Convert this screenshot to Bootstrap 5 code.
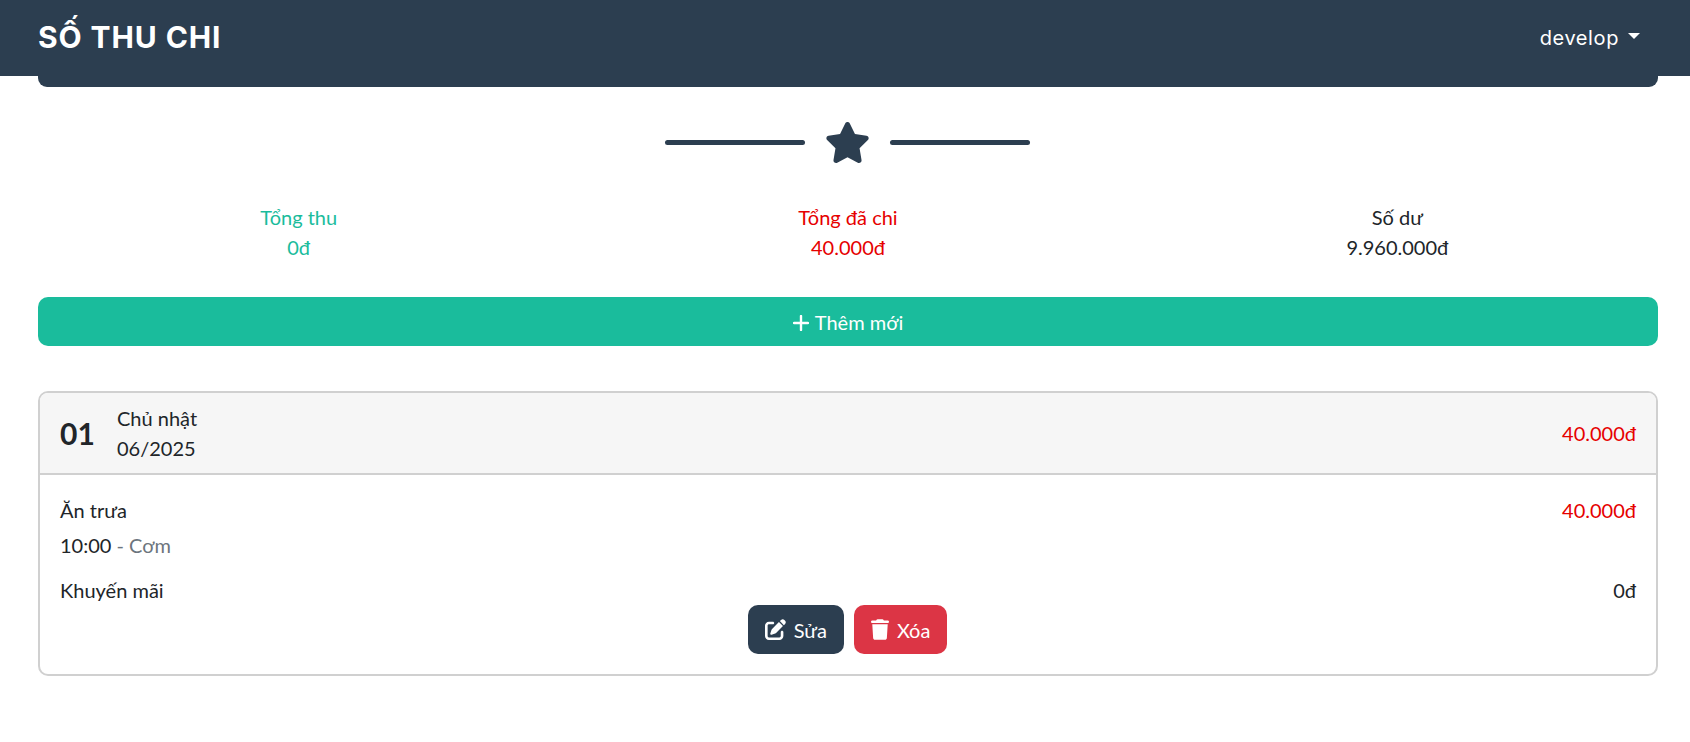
<!DOCTYPE html>
<html lang="vi">
<head>
    <meta charset="UTF-8">
    <meta name="viewport" content="width=device-width, initial-scale=1.0">
    <title>Sổ thu chi</title>
    <link href="https://cdn.jsdelivr.net/npm/bootstrap@5.3.0/dist/css/bootstrap.min.css" rel="stylesheet">
    <style>
        body { font-family: Lato, "Noto Sans", sans-serif; font-size: 20px; color: #212529; background: #fff; }
        .top-bar { background: #2c3e50; height: 76px; padding: 0 38px 2px; }
        .top-brand { font-family: Inter, "Noto Sans", sans-serif; font-weight: 700; font-size: 30px; letter-spacing: .9px; color: #fff; text-decoration: none; }
        .top-user { font-family: Inter, "Noto Sans", sans-serif; font-size: 20px; letter-spacing: .6px; color: #fff; text-decoration: none; margin-right: 12px; }
        .top-user.dropdown-toggle::after { margin-left: 9px; }
        .page-wrap { padding: 0 32px 0 38px; }
        .bar-tab { background: #2c3e50; height: 11px; border-radius: 0 0 9px 9px; }
        .star-divider { height: 110px; gap: 19px; margin-right: 2px; }
        .star-divider i { display: block; width: 140px; height: 5px; background: #2c3e50; border-radius: 3px; }
        .star-divider svg { width: 47px; height: 41px; fill: #2c3e50; }
        .stat-row { margin: 0 -14px; line-height: 30px; padding-top: 5px; }
        .stat-row > div { flex: 1 1 0; }
        .c-in { color: #1abc9c; }
        .c-out { color: #e60000; }
        .add-btn { background: #1abc9c; color: #fff; font-size: 20px; height: 49px; border: 0; border-radius: 10px; margin-top: 35px; }
        .add-btn:hover { background: #1abc9c; color: #fff; }
        .add-btn svg { width: 16px; height: 16px; margin-right: 6px; vertical-align: -1px; }
        .day-box { margin-top: 45px; border: 2px solid #d0d0d0; border-radius: 10px; overflow: hidden; }
        .day-head { background: #f6f6f6; border-bottom: 2px solid #d0d0d0; height: 82px; padding: 0 20px; line-height: 30px; }
        .day-num { font-size: 30px; font-weight: 700; width: 57px; }
        .day-body { padding: 20px 20px 20px; line-height: 30px; height: 199px; }
        .day-line2 { margin-top: 5px; }
        .day-line3 { margin-top: 15px; }
        .note-muted { color: #6c757d; }
        .act-wrap { gap: 10px; margin-right: 1px; }
        .act-btn { height: 49px; font-size: 20px; border: 0; border-radius: 10px; color: #fff; padding: 0 17px; display: flex; align-items: center; gap: 8px; }
        .act-btn:hover { color: #fff; }
        .act-btn svg { fill: #fff; height: 21px; width: 21px; }
        .act-btn svg.trash-ico { width: 18px; }
        .act-edit, .act-edit:hover { background: #2c3e50; }
        .act-del, .act-del:hover { background: #dc3545; }
    </style>
</head>
<body>

<!-- Header -->
<nav class="top-bar d-flex align-items-center justify-content-between">
    <a class="top-brand" href="#">SỐ THU CHI</a>
    <div class="dropdown">
        <a class="top-user dropdown-toggle" href="#" data-bs-toggle="dropdown">develop</a>
        <ul class="dropdown-menu dropdown-menu-end">
            <li><a class="dropdown-item" href="#">Đăng xuất</a></li>
        </ul>
    </div>
</nav>

<div class="page-wrap">
    <div class="bar-tab"></div>

    <div class="star-divider d-flex align-items-center justify-content-center">
        <i></i>
        <svg viewBox="0 0 576 512"><path d="M316.9 18C311.6 7 300.4 0 288.1 0s-23.4 7-28.8 18L195 150.3 51.4 171.5c-12 1.8-22 10.2-25.7 21.7s-.7 24.2 7.9 32.7L137.8 329 113.2 474.7c-2 12 3 24.2 12.9 31.3s23 8 33.8 2.3l128.3-68.5 128.3 68.5c10.8 5.7 23.9 4.9 33.8-2.3s14.9-19.3 12.9-31.3L438.5 329 542.7 225.9c8.6-8.5 11.7-21.2 7.9-32.7s-13.7-19.9-25.7-21.7L381.2 150.3 316.9 18z"/></svg>
        <i></i>
    </div>

    <!-- Totals -->
    <div class="stat-row d-flex text-center">
        <div class="c-in"><div>Tổng thu</div><div>0đ</div></div>
        <div class="c-out"><div>Tổng đã chi</div><div>40.000đ</div></div>
        <div><div>Số dư</div><div>9.960.000đ</div></div>
    </div>

    <button class="btn add-btn w-100">
        <svg viewBox="0 0 16 16"><path d="M8 1v14M1 8h14" stroke="#fff" stroke-width="2.4" stroke-linecap="round"/></svg>Thêm mới
    </button>

    <!-- Day -->
    <div class="day-box">
        <div class="day-head d-flex align-items-center">
            <div class="day-num">01</div>
            <div class="flex-grow-1">
                <div>Chủ nhật</div>
                <div>06/2025</div>
            </div>
            <div class="c-out">40.000đ</div>
        </div>
        <div class="day-body">
            <div class="d-flex justify-content-between">
                <div>Ăn trưa</div>
                <div class="c-out">40.000đ</div>
            </div>
            <div class="day-line2">10:00 <span class="note-muted">- Cơm</span></div>
            <div class="day-line3 d-flex justify-content-between">
                <div>Khuyến mãi</div>
                <div>0đ</div>
            </div>
            <div class="act-wrap d-flex justify-content-center">
                <button class="btn act-btn act-edit">
                    <svg viewBox="0 0 512 512"><path d="M471.6 21.7c-21.9-21.9-57.3-21.9-79.2 0L362.3 51.7l97.9 97.9 30.1-30.1c21.9-21.9 21.9-57.3 0-79.2L471.6 21.7zm-299.2 220c-6.1 6.1-10.8 13.6-13.5 21.9l-29.6 88.8c-2.9 8.6-.6 18.1 5.8 24.6s15.9 8.7 24.6 5.8l88.8-29.6c8.2-2.7 15.7-7.4 21.9-13.5L437.7 172.3 339.7 74.3 172.4 241.7zM96 64C43 64 0 107 0 160V416c0 53 43 96 96 96H352c53 0 96-43 96-96V320c0-17.7-14.3-32-32-32s-32 14.3-32 32v96c0 17.7-14.3 32-32 32H96c-17.7 0-32-14.3-32-32V160c0-17.7 14.3-32 32-32h96c17.7 0 32-14.3 32-32s-14.3-32-32-32H96z"/></svg>
                    Sửa
                </button>
                <button class="btn act-btn act-del">
                    <svg class="trash-ico" viewBox="0 0 448 512"><path d="M135.2 17.7L128 32H32C14.3 32 0 46.3 0 64S14.3 96 32 96H416c17.7 0 32-14.3 32-32s-14.3-32-32-32H320l-7.2-14.3C307.4 6.8 296.3 0 284.2 0H163.8c-12.1 0-23.2 6.8-28.6 17.7zM416 128H32L53.2 467c1.6 25.3 22.6 45 47.9 45H346.9c25.3 0 46.3-19.7 47.9-45L416 128z"/></svg>
                    Xóa
                </button>
            </div>
        </div>
    </div>
</div>

<script src="https://cdn.jsdelivr.net/npm/bootstrap@5.3.0/dist/js/bootstrap.bundle.min.js"></script>
</body>
</html>
